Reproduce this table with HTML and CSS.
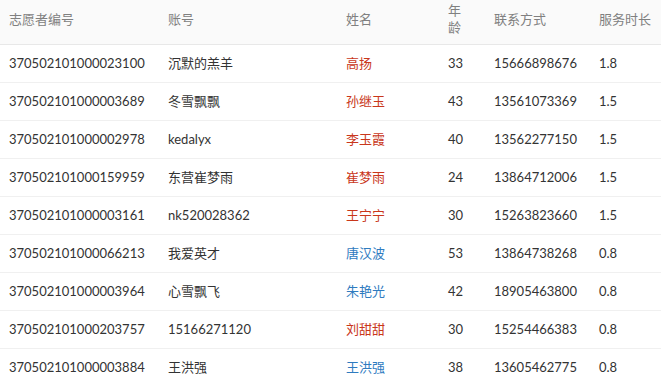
FILE: index.html
```html
<!DOCTYPE html>
<html lang="zh-CN">
<head>
<meta charset="utf-8">
<title>志愿者列表</title>
<link rel="stylesheet" href="styles.css">
</head>
<body>
<table class="grid">
  <colgroup>
    <col class="c-id"><col class="c-acc"><col class="c-name"><col class="c-age"><col class="c-tel"><col class="c-hours">
  </colgroup>
  <thead>
    <tr>
      <th>志愿者编号</th><th>账号</th><th>姓名</th><th class="age">年龄</th><th>联系方式</th><th>服务时长</th>
    </tr>
  </thead>
  <tbody>
    <tr><td>370502101000023100</td><td>沉默的羔羊</td><td class="red">高扬</td><td>33</td><td>15666898676</td><td>1.8</td></tr>
    <tr><td>370502101000003689</td><td>冬雪飘飘</td><td class="red">孙继玉</td><td>43</td><td>13561073369</td><td>1.5</td></tr>
    <tr><td>370502101000002978</td><td>kedalyx</td><td class="red">李玉霞</td><td>40</td><td>13562277150</td><td>1.5</td></tr>
    <tr><td>370502101000159959</td><td>东营崔梦雨</td><td class="red">崔梦雨</td><td>24</td><td>13864712006</td><td>1.5</td></tr>
    <tr><td>370502101000003161</td><td>nk520028362</td><td class="red">王宁宁</td><td>30</td><td>15263823660</td><td>1.5</td></tr>
    <tr><td>370502101000066213</td><td>我爱英才</td><td class="blue">唐汉波</td><td>53</td><td>13864738268</td><td>0.8</td></tr>
    <tr><td>370502101000003964</td><td>心雪飘飞</td><td class="blue">朱艳光</td><td>42</td><td>18905463800</td><td>0.8</td></tr>
    <tr><td>370502101000203757</td><td>15166271120</td><td class="red">刘甜甜</td><td>30</td><td>15254466383</td><td>0.8</td></tr>
    <tr><td>370502101000003884</td><td>王洪强</td><td class="blue">王洪强</td><td>38</td><td>13605462775</td><td>0.8</td></tr>
  </tbody>
</table>
</body>
</html>
```
FILE: styles.css
```css
html, body {
  margin: 0;
  padding: 0;
  background: #fff;
}
body {
  font-family: Lato, "Noto Sans CJK SC", sans-serif;
  font-size: 13px;
  color: #333;
}
.grid {
  width: 661px;
  border-collapse: collapse;
  table-layout: fixed;
}
.c-id { width: 159px; }
.c-acc { width: 178px; }
.c-name { width: 102px; }
.c-age { width: 46px; }
.c-tel { width: 105px; }
.c-hours { width: 71px; }
.grid th {
  background: #fafafa;
  color: #808080;
  font-weight: normal;
  text-align: left;
  line-height: 17px;
  padding: 2px 8px 8px 9px;
  border-bottom: 1px solid #e8e8e8;
  vertical-align: middle;
}
.grid th.age {
  padding-right: 22px;
}
.grid td {
  line-height: 17px;
  padding: 10px 8px 10px 9px;
  border-bottom: 1px solid #f0f0f0;
  vertical-align: middle;
  white-space: nowrap;
}
.grid td.red { color: #c9371b; }
.grid td.blue { color: #2f7bbf; }
```
